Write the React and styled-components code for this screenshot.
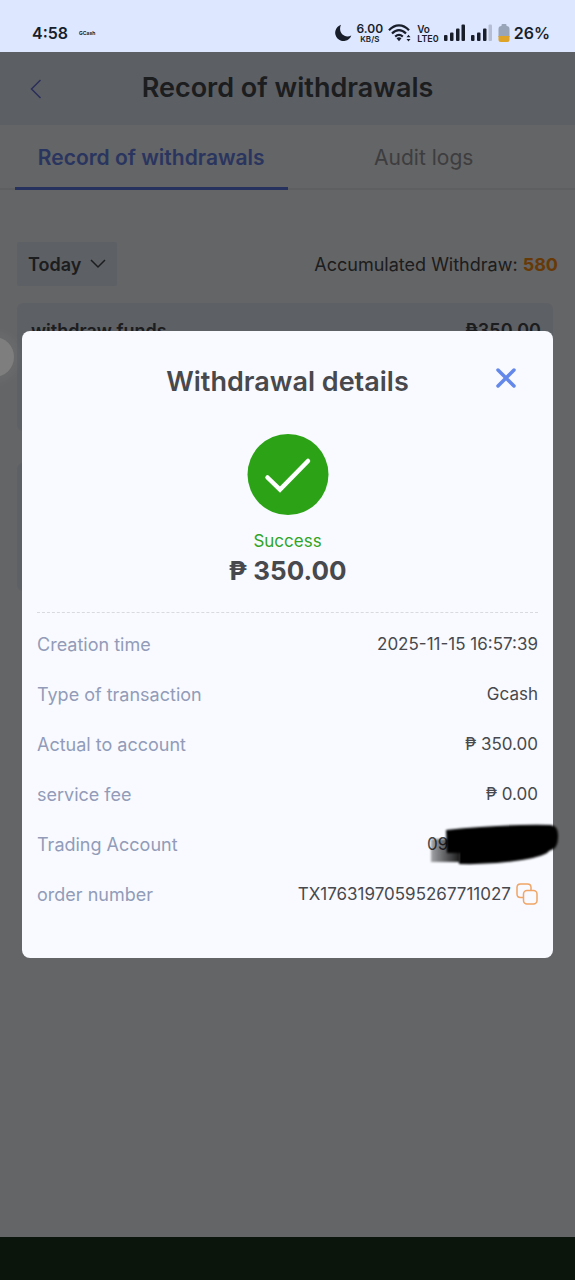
import React, { useState } from 'react';
import styled, { createGlobalStyle } from 'styled-components';

const GlobalStyle = createGlobalStyle`
  * {
    box-sizing: border-box;
  }

  body {
    margin: 0;
    background: #0c150b;
    font-family: Inter, 'Noto Sans', sans-serif;
    color: #48494d;
  }

  button, select {
    font: inherit;
    color: inherit;
    border: 0;
    background: none;
    padding: 0;
    cursor: pointer;
  }
`;

const Screen = styled.div`
  display: flex;
  flex-direction: column;
  min-height: 100vh;
`;

const StatusBar = styled.div`
  display: flex;
  align-items: center;
  justify-content: space-between;
  height: 52px;
  padding: 14px 25px 0 32px;
  background: #dde7ff;
  color: #191e2b;
`;

const StatusGroup = styled.div`
  display: flex;
  align-items: center;
  gap: ${({ $gap }) => $gap}px;
`;

const Clock = styled.span`
  font-size: 16px;
  font-weight: 600;
`;

const Carrier = styled.span`
  font-size: 5px;
  font-weight: 700;
`;

const Stack = styled.span`
  display: flex;
  flex-direction: column;
  align-items: ${({ $align }) => $align || 'center'};
  font-size: ${({ $size }) => $size}px;
  font-weight: 600;
  line-height: 12px;

  small {
    font-size: ${({ $small }) => $small}px;
    line-height: 8px;
  }
`;

const Page = styled.div`
  position: relative;
  flex: 1;
  background: #fbfcff;
`;

const Header = styled.header`
  display: grid;
  grid-template-columns: 44px 1fr 44px;
  align-items: center;
  height: 73px;
  padding: 0 14px;
  background: #e5edfb;
`;

const BackButton = styled.button`
  display: flex;
  justify-content: center;
  color: #6a75e0;
`;

const Title = styled.h1`
  margin: 0;
  padding-bottom: 2px;
  font-size: 27px;
  font-weight: 600;
  line-height: 32px;
  text-align: center;
`;

const Tabs = styled.nav`
  display: flex;
  padding: 0 15px;
  border-bottom: 2px solid #ecedf0;
`;

const Tab = styled.button`
  flex: 1;
  height: 65px;
  margin-bottom: -2px;
  padding-top: 3px;
  border-bottom: 3px solid ${({ $active }) => ($active ? '#5f7de8' : 'transparent')};
  color: ${({ $active }) => ($active ? '#6a86ee' : '#98999e')};
  font-size: 21px;
  font-weight: ${({ $active }) => ($active ? 600 : 400)};
`;

const FilterRow = styled.div`
  display: flex;
  align-items: center;
  justify-content: space-between;
  padding: 52px 17px 17px;
`;

const DateFilter = styled.label`
  display: flex;
  align-items: center;
  width: 100px;
  height: 44px;
  padding-left: 11px;
  border-radius: 2px;
  background: #e9effc;

  select {
    width: 54px;
    appearance: none;
    font-size: 18px;
    font-weight: 600;
  }

  svg {
    margin-left: 8px;
  }
`;

const Total = styled.p`
  margin: 0;
  font-size: 18px;

  strong {
    color: #ff9010;
    font-weight: 700;
  }
`;

const Record = styled.div`
  display: flex;
  justify-content: space-between;
  height: 128px;
  margin: 0 22px 32px 17px;
  padding: 16px 12px 14px 14px;
  border-radius: 6px;
  background: #e9effc;
  font-size: 18px;
  font-weight: 600;
  line-height: 24px;
`;

const Overlay = styled.div`
  position: absolute;
  inset: 0;
  display: flex;
  align-items: center;
  padding: 0 22px;
  background: rgba(0, 0, 0, 0.6);
`;

const FloatingBubble = styled.div`
  position: absolute;
  top: 285px;
  left: -26px;
  width: 40px;
  height: 40px;
  border-radius: 50%;
  background: #7e7e7e;
  box-shadow: 0 0 8px 6px rgba(255, 255, 255, 0.04);
`;

const Dialog = styled.section`
  width: 100%;
  padding: 32px 15px 39px;
  border-radius: 8px;
  background: #f8faff;
`;

const DialogHead = styled.div`
  display: grid;
  grid-template-columns: 64px 1fr 64px;
  align-items: center;
  height: 36px;

  h2 {
    margin: 0;
    grid-column: 2;
    font-size: 27px;
    font-weight: 600;
    text-align: center;
  }
`;

const CloseButton = styled.button`
  display: flex;
  justify-content: center;
  align-self: start;
  padding-top: 4px;
  color: #6488ea;
`;

const Result = styled.div`
  display: flex;
  flex-direction: column;
  align-items: center;
  padding: 35px 0 23px;
  border-bottom: 1px dashed #d8dade;
`;

const ResultText = styled.span`
  margin-top: 13px;
  color: #33a422;
  font-size: 17px;
  line-height: 24px;
`;

const Amount = styled.strong`
  font-size: 26px;
  font-weight: 700;
  line-height: 36px;
`;

const Details = styled.dl`
  margin: 6px 0 0;
`;

const DetailRow = styled.div`
  display: flex;
  align-items: center;
  justify-content: space-between;
  height: 50px;

  dt {
    color: #929cb8;
    font-size: 18px;
  }

  dd {
    position: relative;
    display: flex;
    align-items: center;
    gap: 5px;
    margin: 0;
    font-size: 17px;
  }
`;

const Masked = styled.span`
  width: 111px;
`;

const Scribble = styled.svg`
  position: absolute;
  top: -12px;
  right: -22px;
`;

const CopyButton = styled.button`
  display: flex;
  color: #f0a465;
`;

const NavigationBar = styled.div`
  height: 43px;
  background: #0c150b;
`;

function SignalIcon({ weak }) {
  return (
    <svg width="22" height="18" viewBox="0 0 22 18" fill="currentColor">
      <rect x="0" y="11" width="3.500" height="6" rx="1" />
      <rect x="6" y="8.500" width="3.500" height="8.500" rx="1" />
      <rect x="12" y="4.500" width="3.500" height="12.500" rx="1" />
      <rect x="17.500" y="0.500" width="3.500" height="16.500" rx="1" opacity={weak ? 0.2 : 1} />
    </svg>
  );
}

function StatusIcons() {
  return (
    <StatusGroup $gap={5}>
      <svg width="18" height="18" viewBox="0 0 18 18" fill="currentColor">
        <path d="M7 .8A8.300 8.300 0 1 0 17.300 11.500C10.500 15 3.500 8.500 7 .8Z" />
      </svg>
      <Stack $size={12} $small={8}>6.00<small>KB/S</small></Stack>
      <svg width="24" height="18" viewBox="0 0 24 18" fill="none" stroke="currentColor" strokeWidth="2.200">
        <path d="M1 6.200C7-.3 15-.3 21 6.200M4 9.500C8.500 5 13.500 5 18 9.500M7.200 12.600C9.800 10.200 12.200 10.200 14.800 12.600" />
        <path d="M8.500 14.300Q11 12.300 13.500 14.300L11 17.200ZM18.500 13.200L20.500 10.800L22.500 13.200ZM18.500 15L20.500 17.400L22.500 15Z" fill="currentColor" stroke="none" />
      </svg>
      <Stack $size={10} $small={9} $align="flex-start">Vo<small>LTE0</small></Stack>
      <SignalIcon />
      <SignalIcon weak />
      <StatusGroup $gap={4}>
        <svg width="12" height="19" viewBox="0 0 12 19">
          <path d="M3.500 2V1Q3.500 0 4.500 0H7.500Q8.500 0 8.500 1V2Q11.500 2 11.500 5V13H.5V5Q.5 2 3.500 2Z" fill="#98a4b8" />
          <path d="M.5 12H11.500V16Q11.500 18 9.500 18H2.500Q.5 18 .5 16Z" fill="#dda428" />
        </svg>
        <Clock>26%</Clock>
      </StatusGroup>
    </StatusGroup>
  );
}

const details = [
  { label: 'Creation time', value: '2025-11-15 16:57:39' },
  { label: 'Type of transaction', value: 'Gcash' },
  { label: 'Actual to account', value: '₱ 350.00' },
  { label: 'service fee', value: '₱ 0.00' },
  { label: 'Trading Account', value: '09', masked: true },
  { label: 'order number', value: 'TX17631970595267711027', copy: true },
];

function WithdrawalDialog({ onClose }) {
  return (
    <Dialog role="dialog" aria-labelledby="dialog-title">
      <DialogHead>
        <h2 id="dialog-title">Withdrawal details</h2>
        <CloseButton onClick={onClose} aria-label="Close">
          <svg width="22" height="22" viewBox="0 0 22 22" fill="none" stroke="currentColor" strokeWidth="3.500" strokeLinecap="round">
            <path d="M3 3L19 19M19 3L3 19" />
          </svg>
        </CloseButton>
      </DialogHead>

      <Result>
        <svg width="82" height="82" viewBox="0 0 82 82">
          <circle cx="41" cy="40.500" r="40.500" fill="#2ca317" />
          <path d="M20.500 43.500L33 55.500L61 27" fill="none" stroke="#fff" strokeWidth="4.500" strokeLinecap="round" />
        </svg>
        <ResultText>Success</ResultText>
        <Amount>₱ 350.00</Amount>
      </Result>

      <Details>
        {details.map(({ label, value, masked, copy }) => (
          <DetailRow key={label}>
            <dt>{label}</dt>
            <dd>
              {masked ? <Masked>{value}</Masked> : value}
              {masked && (
                <Scribble width="134" height="44" viewBox="0 0 134 44">
                  <defs>
                    <filter id="soft"><feGaussianBlur stdDeviation="1.300" /></filter>
                    <linearGradient id="fade">
                      <stop offset="0" stopOpacity="0.35" />
                      <stop offset="1" stopOpacity="0.9" />
                    </linearGradient>
                  </defs>
                  <path d="M5 17H34V40H5Z" fill="url(#fade)" filter="url(#soft)" />
                  <path d="M20 8Q75 2 125 3Q133 4 132 16Q132 27 123 29Q120 34 96 38Q65 43 33 42V31H21Z" filter="url(#soft)" />
                </Scribble>
              )}
              {copy && (
                <CopyButton aria-label="Copy order number">
                  <svg width="22" height="22" viewBox="0 0 22 22" fill="none" stroke="currentColor" strokeWidth="1.500">
                    <path d="M7.500 14.500H4.500Q1 14.500 1 11V4.500Q1 1 4.500 1H11.500Q15 1 15 4.500V7.500" />
                    <rect x="7.500" y="7.500" width="13.500" height="13.500" rx="3.500" />
                  </svg>
                </CopyButton>
              )}
            </dd>
          </DetailRow>
        ))}
      </Details>
    </Dialog>
  );
}

function App() {
  const [open, setOpen] = useState(true);
  const [tab, setTab] = useState('records');

  return (
    <Screen>
      <GlobalStyle />
      <StatusBar>
        <StatusGroup $gap={11}>
          <Clock>4:58</Clock>
          <Carrier>GCash</Carrier>
        </StatusGroup>
        <StatusIcons />
      </StatusBar>

      <Page>
        <Header>
          <BackButton aria-label="Back">
            <svg width="12" height="20" viewBox="0 0 12 20" fill="none" stroke="currentColor" strokeWidth="1.500">
              <path d="M10.500 1L1.500 10L10.500 19" />
            </svg>
          </BackButton>
          <Title>Record of withdrawals</Title>
        </Header>

        <Tabs>
          <Tab $active={tab === 'records'} onClick={() => setTab('records')}>Record of withdrawals</Tab>
          <Tab $active={tab === 'audit'} onClick={() => setTab('audit')}>Audit logs</Tab>
        </Tabs>

        <FilterRow>
          <DateFilter>
            <select aria-label="Period">
              <option>Today</option>
            </select>
            <svg width="16" height="10" viewBox="0 0 16 10" fill="none" stroke="currentColor" strokeWidth="1.500">
              <path d="M1 1L8 8L15 1" />
            </svg>
          </DateFilter>
          <Total>Accumulated Withdraw: <strong>580</strong></Total>
        </FilterRow>

        <Record>
          <span>withdraw funds</span>
          <span>₱350.00</span>
        </Record>
        <Record />

        {open && (
          <Overlay>
            <FloatingBubble />
            <WithdrawalDialog onClose={() => setOpen(false)} />
          </Overlay>
        )}
      </Page>
      <NavigationBar />
    </Screen>
  );
}

export default App;
